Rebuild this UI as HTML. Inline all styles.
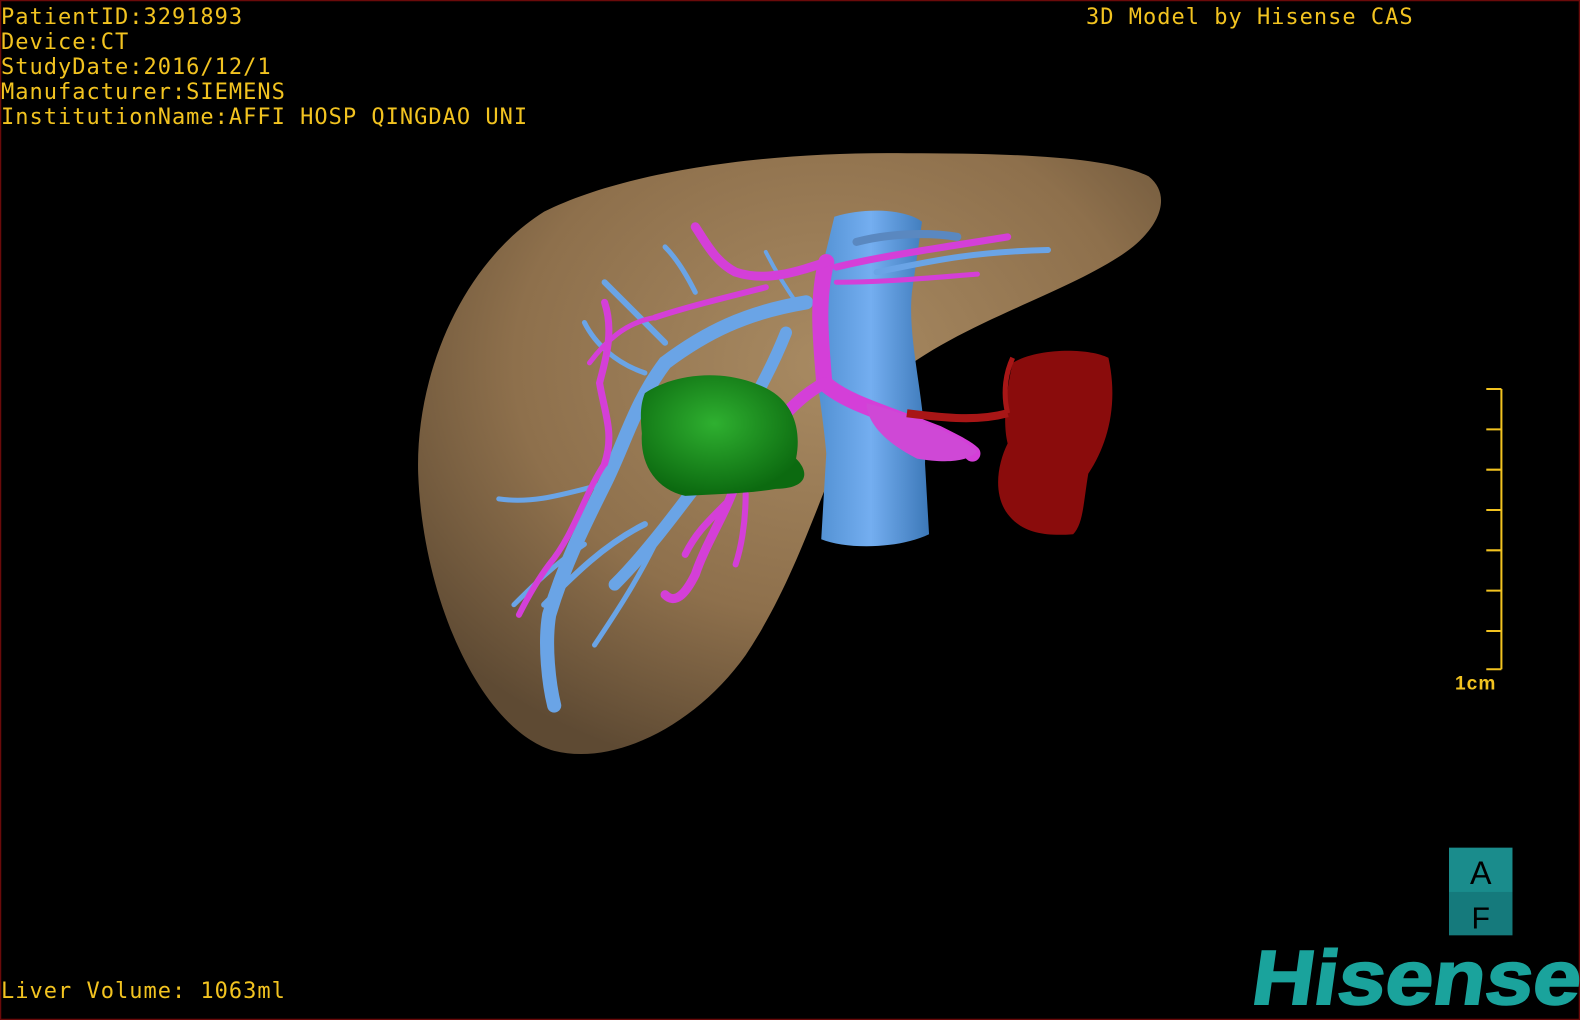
<!DOCTYPE html>
<html><head><meta charset="utf-8"><style>
html,body{margin:0;padding:0;background:#000;}
body{width:1580px;height:1020px;position:relative;overflow:hidden;}
.t{position:absolute;color:#f2c320;font-family:"DejaVu Sans Mono","Liberation Mono",monospace;font-size:22px;line-height:25px;white-space:pre;letter-spacing:1px;}
svg{position:absolute;left:0;top:0;}
</style></head><body>
<svg width="1580" height="1020" viewBox="0 0 1568 1012" preserveAspectRatio="none">
<defs>
<radialGradient id="lv" cx="0.55" cy="0.35" r="0.7">
<stop offset="0" stop-color="#a88a62"/><stop offset="0.6" stop-color="#8e704c"/><stop offset="1" stop-color="#5e4a33"/>
</radialGradient>
<radialGradient id="gr" cx="0.45" cy="0.4" r="0.6"><stop offset="0" stop-color="#2fb030"/><stop offset="1" stop-color="#0c6a10"/></radialGradient>
<linearGradient id="ivc" x1="0" x2="1"><stop offset="0" stop-color="#4f8ed0"/><stop offset="0.5" stop-color="#74aef0"/><stop offset="1" stop-color="#3c78b8"/></linearGradient>
</defs>
<rect x="0.5" y="0.5" width="1567" height="1011" fill="none" stroke="#6a0a0a" stroke-width="1.5"/>
<path d="M540 210 C620 170 760 150 900 152 C1000 152 1100 155 1140 175 C1165 195 1150 230 1110 255 C1040 300 920 330 860 400 C820 460 800 560 740 650 C690 720 610 760 550 745 C480 725 420 600 415 470 C412 370 460 260 540 210 Z" fill="url(#lv)"/>
<path d="M828 215 C860 205 900 208 915 220 L905 290 C900 340 920 400 918 460 L922 530 C890 545 840 545 815 535 L820 450 C815 390 800 330 810 290 Z" fill="url(#ivc)"/>
<g stroke="#6aa4e6" fill="none" stroke-linecap="round">
<path d="M800 300 C740 310 700 330 660 360 C630 400 620 440 600 480 C580 520 560 560 545 610 C540 640 545 680 550 700" stroke-width="14"/>
<path d="M780 330 C760 380 730 430 700 470 C670 510 640 550 610 580" stroke-width="12"/>
<path d="M660 340 C640 320 620 300 600 280" stroke-width="6"/>
<path d="M640 370 C610 360 590 340 580 320" stroke-width="5"/>
<path d="M600 480 C560 490 530 500 495 495" stroke-width="5"/>
<path d="M580 540 C550 560 530 580 510 600" stroke-width="5"/>
<path d="M640 520 C600 540 570 570 540 600" stroke-width="6"/>
<path d="M650 540 C630 580 610 610 590 640" stroke-width="5"/>
<path d="M870 270 C920 260 960 250 1040 248" stroke-width="6"/>
<path d="M850 240 C880 232 920 230 950 235" stroke-width="8" stroke="#5a88c0"/>
<path d="M690 290 C680 270 670 255 660 245" stroke-width="5"/>
<path d="M760 250 C770 270 780 285 790 300" stroke-width="4"/>
</g>
<g stroke="#d43fd8" fill="none" stroke-linecap="round">
<path d="M820 260 C810 300 815 340 818 380 C840 400 880 410 930 430 C950 440 960 445 965 450" stroke-width="16"/>
<path d="M820 260 C790 270 760 280 730 270 C710 260 700 240 690 225" stroke-width="9"/>
<path d="M830 265 C870 255 920 248 1000 235" stroke-width="7"/>
<path d="M830 280 C880 280 930 275 970 272" stroke-width="5"/>
<path d="M760 285 C720 295 680 305 650 315" stroke-width="6"/>
<path d="M650 315 C620 320 600 340 585 360" stroke-width="5"/>
<path d="M600 300 C610 330 600 360 595 380 C600 410 610 430 600 460" stroke-width="7"/>
<path d="M600 460 C580 490 570 530 545 560 C530 580 520 600 515 610" stroke-width="6"/>
<path d="M730 480 C720 510 700 540 690 570 C680 590 670 600 660 590" stroke-width="9"/>
<path d="M720 500 C700 520 690 530 680 550" stroke-width="7"/>
<path d="M740 490 C740 520 735 545 730 560" stroke-width="6"/>
<path d="M818 380 C800 390 790 400 780 410" stroke-width="12"/>
</g>
<path d="M860 400 C900 410 950 430 970 448 C960 458 940 460 910 455 C880 440 860 420 860 400 Z" fill="#cf48d6"/>
<path d="M640 390 C670 370 720 365 760 385 C790 400 795 430 790 455 C805 470 800 485 770 485 C740 490 710 490 680 492 C650 485 635 460 637 430 C635 410 636 400 640 390 Z" fill="url(#gr)"/>
<path d="M1005 360 C1030 345 1080 345 1100 355 C1110 400 1100 440 1080 470 C1075 500 1075 520 1065 530 C1040 532 1015 530 1000 510 C985 490 990 460 1000 440 C995 420 998 390 1005 360 Z" fill="#8a0c0c"/>
<path d="M900 410 C940 415 970 418 1000 410" stroke="#a81616" stroke-width="8" fill="none"/>
<path d="M1000 410 C995 390 998 370 1005 355" stroke="#a81616" stroke-width="5" fill="none"/>
<g stroke="#f2c320" stroke-width="2" fill="none">
<path d="M1490 386 V664 M1475 386 H1490 M1475 426 H1490 M1475 466 H1490 M1475 506 H1490 M1475 546 H1490 M1475 586 H1490 M1475 626 H1490 M1475 664 H1490"/>
</g>
<text x="1444" y="684" fill="#f2c320" font-family="Liberation Sans,sans-serif" font-size="19" font-weight="bold" letter-spacing="1">1cm</text>
<rect x="1438" y="841" width="63" height="44" fill="#1a8c8c"/>
<rect x="1438" y="885" width="63" height="43" fill="#157a7c"/>
<text x="1469.5" y="877" text-anchor="middle" fill="#000" font-family="Liberation Sans,sans-serif" font-size="32">A</text>
<text x="1469.5" y="921" text-anchor="middle" fill="#000" font-family="Liberation Sans,sans-serif" font-size="30">F</text>
<text x="1240" y="996" fill="#1aa39c" stroke="#1aa39c" stroke-width="2" font-family="Liberation Sans,sans-serif" font-size="76" font-weight="bold" textLength="326" lengthAdjust="spacingAndGlyphs" transform="skewX(-8) translate(140 0)">Hisense</text>
</svg>
<div class="t" style="left:1px;top:5px;">PatientID:3291893
Device:CT
StudyDate:2016/12/1
Manufacturer:SIEMENS
InstitutionName:AFFI HOSP QINGDAO UNI</div>
<div class="t" style="left:1086px;top:5px;">3D Model by Hisense CAS</div>
<div class="t" style="left:1px;top:979px;">Liver Volume: 1063ml</div>
</body></html>
